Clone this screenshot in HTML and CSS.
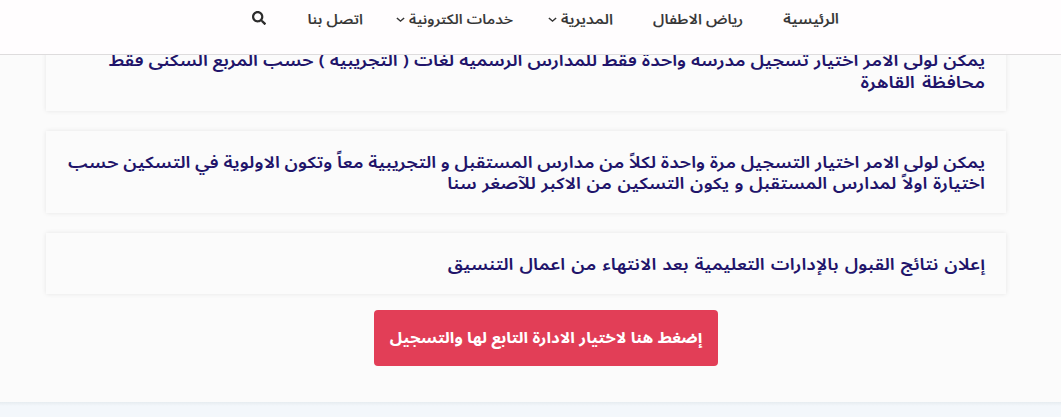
FILE: index.html
```html
<!DOCTYPE html>
<html lang="ar" dir="rtl">
<head>
<meta charset="utf-8">
<title>رياض الاطفال</title>
<link rel="stylesheet" href="styles.css">
</head>
<body>
<header class="header">
  <nav class="nav">
    <a class="nav-link home">الرئيسية</a>
    <a class="nav-link kg">رياض الاطفال</a>
    <a class="nav-link directorate has-menu">المديرية <svg class="caret" viewBox="0 0 8 6"><path d="M.8 1 4 4.2 7.2 1"/></svg></a>
    <a class="nav-link services has-menu">خدمات الكترونية <svg class="caret" viewBox="0 0 8 6"><path d="M.8 1 4 4.2 7.2 1"/></svg></a>
    <a class="nav-link contact">اتصل بنا</a>
    <svg class="search" viewBox="0 0 512 512"><path d="M505 442.700 405.300 343c-4.500-4.500-10.600-7-17-7H372c27.600-35.300 44-79.700 44-128C416 93.100 322.900 0 208 0S0 93.100 0 208s93.100 208 208 208c48.300 0 92.700-16.400 128-44v16.300c0 6.400 2.500 12.500 7 17l99.700 99.700c9.400 9.400 24.600 9.400 33.900 0l28.300-28.300c9.400-9.400 9.400-24.600.1-34zM208 336c-70.700 0-128-57.200-128-128 0-70.700 57.200-128 128-128 70.700 0 128 57.200 128 128 0 70.700-57.200 128-128 128z"/></svg>
  </nav>
</header>
<main class="content">
  <section class="card"><span class="line l1">يمكن لولى الامر اختيار تسجيل مدرسة واحدة فقط للمدارس الرسمية لغات ( التجريبية ) حسب المربع السكنى فقط</span><span class="line l2">محافظة القاهرة</span></section>
  <section class="card"><span class="line l3">يمكن لولى الامر اختيار التسجيل مرة واحدة لكلاً من مدارس المستقبل و التجريبية معاً وتكون الاولوية في التسكين حسب</span><span class="line l4">اختيارة اولاً لمدارس المستقبل و يكون التسكين من الاكبر للآصغر سنا</span></section>
  <section class="card"><span class="line l5">إعلان نتائج القبول بالإدارات التعليمية بعد الانتهاء من اعمال التنسيق</span></section>
  <a class="button"><span class="label">إضغط هنا لاختيار الادارة التابع لها والتسجيل</span></a>
</main>
<footer class="footer"></footer>
</body>
</html>
```
FILE: styles.css
```css
* { box-sizing: border-box; }
body {
  margin: 0;
  height: 417px;
  overflow: hidden;
  background: #fbfbfb;
  font-family: "Noto Sans Arabic", "DejaVu Sans", sans-serif;
}
.header {
  position: fixed;
  inset: 0 0 auto 0;
  z-index: 2;
  height: 55px;
  background: #fffdfe;
  border-bottom: 1px solid #dedcdd;
}
.nav {
  display: flex;
  align-items: center;
  gap: 40px;
  height: 38px;
  padding-right: 222px;
}
.nav-link {
  display: flex;
  align-items: center;
  gap: 4px;
  white-space: nowrap;
  font-size: 16px;
  line-height: 24px;
  font-weight: 500;
  color: #333;
  -webkit-text-stroke: .2px #333;
  transform: translateY(1px) scaleY(.88);
}
.home { width: 56px; font-size: 16.6px; }
.kg { width: 90px; }
.directorate { width: 66px; font-size: 16.4px; }
.services { width: 116px; font-size: 15.5px; }
.contact { width: 56px; font-size: 16px; }
.has-menu { margin-left: -6px; }
.caret {
  flex: none;
  width: 9px;
  height: 8px;
  fill: none;
  stroke: #333;
  stroke-width: 1.3;
}
.search { width: 14px; height: 14px; fill: #2c2c2c; margin: -2px 1px 0 0; }
.content {
  display: flex;
  flex-direction: column;
  gap: 20px;
  height: 402px;
  padding: 29px 55px 0 46px;
}
.card {
  flex: none;
  display: flex;
  flex-direction: column;
  padding: 20px 21px;
  box-shadow: 0 0 5px rgba(0, 0, 0, .09);
  background: #fbfbfb;
}
.line {
  white-space: nowrap;
  font-size: 18.8px;
  line-height: 21px;
  font-weight: 600;
  color: #21146a;
  transform: translateY(1px) scaleY(.86);
  transform-origin: 50% 75%;
}
.l1 { word-spacing: .17px; }
.l2 { font-size: 19.3px; word-spacing: 2px; }
.l3 { word-spacing: -.18px; }
.l4 { word-spacing: .75px; }
.l5 { word-spacing: 1.15px; }
.button {
  flex: none;
  align-self: flex-end;
  display: flex;
  align-items: center;
  justify-content: center;
  width: 344px;
  height: 56px;
  margin: -4px 0 0 328px;
  border-radius: 4px;
  background: #e23e57;
  color: #fff;
  font-size: 16.8px;
  font-weight: 700;
  white-space: nowrap;
}
.label { transform: scaleY(.9); }
.footer {
  height: 15px;
  background: linear-gradient(#e6ecf0, #f3f7fb 4px);
}
```
